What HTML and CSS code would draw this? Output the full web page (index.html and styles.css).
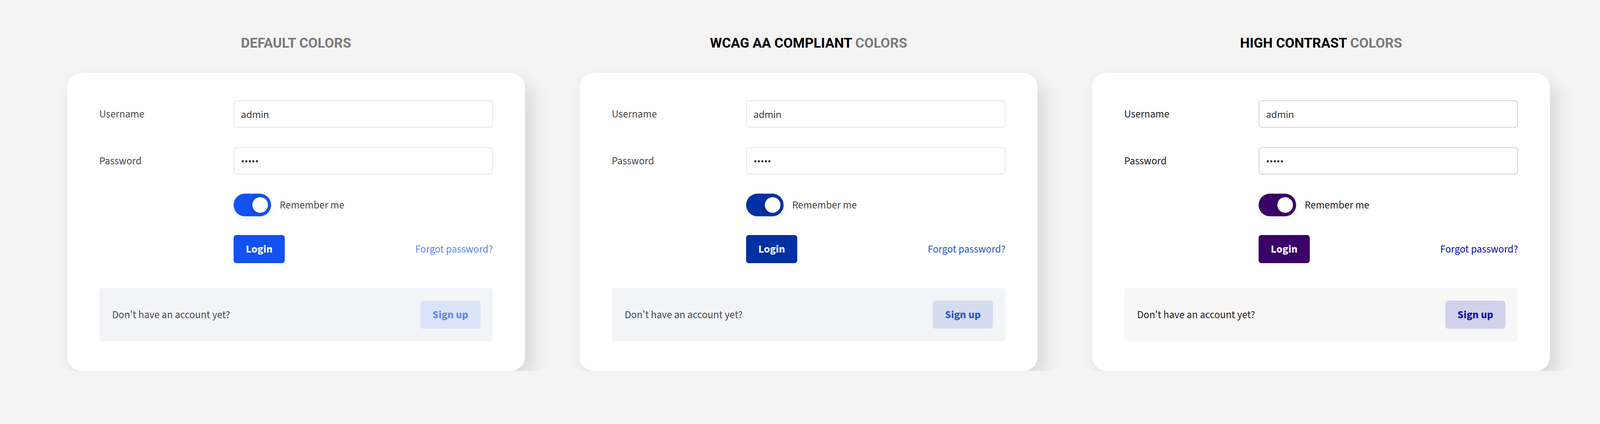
FILE: index.html
```html
<!DOCTYPE html>
<html lang="en">
<head>
<meta charset="utf-8">
<title>Login color variants</title>
<link rel="stylesheet" href="styles.css">
</head>
<body>
<main class="page">
  <section class="column">
    <h2 class="title">DEFAULT COLORS</h2>
    <div class="card theme-default">
      <form class="form">
        <div class="row">
          <label class="label">Username</label>
          <input class="input" type="text" value="admin">
        </div>
        <div class="row">
          <label class="label">Password</label>
          <input class="input" type="password" value="admin">
        </div>
        <div class="row row-small">
          <span></span>
          <div class="remember">
            <span class="toggle"><span class="knob"></span></span>
            <span class="remember-text">Remember me</span>
          </div>
        </div>
        <div class="row">
          <span></span>
          <div class="actions">
            <button class="btn-login" type="button">Login</button>
            <a class="forgot">Forgot password?</a>
          </div>
        </div>
      </form>
      <div class="signup">
        <span class="signup-text">Don't have an account yet?</span>
        <button class="btn-signup" type="button">Sign up</button>
      </div>
    </div>
  </section>

  <section class="column">
    <h2 class="title"><span class="title-strong">WCAG AA COMPLIANT</span> COLORS</h2>
    <div class="card theme-wcag">
      <form class="form">
        <div class="row">
          <label class="label">Username</label>
          <input class="input" type="text" value="admin">
        </div>
        <div class="row">
          <label class="label">Password</label>
          <input class="input" type="password" value="admin">
        </div>
        <div class="row row-small">
          <span></span>
          <div class="remember">
            <span class="toggle"><span class="knob"></span></span>
            <span class="remember-text">Remember me</span>
          </div>
        </div>
        <div class="row">
          <span></span>
          <div class="actions">
            <button class="btn-login" type="button">Login</button>
            <a class="forgot">Forgot password?</a>
          </div>
        </div>
      </form>
      <div class="signup">
        <span class="signup-text">Don't have an account yet?</span>
        <button class="btn-signup" type="button">Sign up</button>
      </div>
    </div>
  </section>

  <section class="column">
    <h2 class="title"><span class="title-strong">HIGH CONTRAST</span> COLORS</h2>
    <div class="card theme-hc">
      <form class="form">
        <div class="row">
          <label class="label">Username</label>
          <input class="input" type="text" value="admin">
        </div>
        <div class="row">
          <label class="label">Password</label>
          <input class="input" type="password" value="admin">
        </div>
        <div class="row row-small">
          <span></span>
          <div class="remember">
            <span class="toggle"><span class="knob"></span></span>
            <span class="remember-text">Remember me</span>
          </div>
        </div>
        <div class="row">
          <span></span>
          <div class="actions">
            <button class="btn-login" type="button">Login</button>
            <a class="forgot">Forgot password?</a>
          </div>
        </div>
      </form>
      <div class="signup">
        <span class="signup-text">Don't have an account yet?</span>
        <button class="btn-signup" type="button">Sign up</button>
      </div>
    </div>
  </section>
</main>
</body>
</html>
```

FILE: styles.css
```css
html, body {
  margin: 0;
  padding: 0;
  background: #f4f4f4;
}

body {
  font-family: "Source Sans Pro", "Source Sans 3", Lato, "Liberation Sans", sans-serif;
}

.page {
  display: grid;
  grid-template-columns: repeat(3, 1172px);
  column-gap: 140px;
  padding: 91px 172px 0;
}

.column {
  display: flex;
  flex-direction: column;
}

.title {
  margin: 0 0 56px;
  text-align: center;
  font-family: Roboto, "Liberation Sans", sans-serif;
  font-weight: 700;
  font-size: 35px;
  line-height: 40px;
  color: #7a7a7a;
}

.title-strong {
  color: #000;
}

/* themes */
.theme-default {
  --primary: #1351f0;
  --link: #5c86f5;
  --signup-bg: #dbe3f8;
  --signup-text: #5c86f5;
  --footer-bg: #f3f4f8;
  --input-border: #e7e7ee;
  --text: #4a4a4a;
}

.theme-wcag {
  --primary: #0031a2;
  --link: #2a55c8;
  --signup-bg: #d5dcf0;
  --signup-text: #2a55c8;
  --footer-bg: #f3f4f8;
  --input-border: #e7e7ee;
  --text: #4a4a4a;
}

.theme-hc {
  --primary: #3a0068;
  --link: #0c0ca8;
  --signup-bg: #d1d1eb;
  --signup-text: #0d0aa8;
  --footer-bg: #f7f7f7;
  --input-border: #d2d2d2;
  --text: #222222;
}

.card {
  background: #fff;
  border-radius: 36px;
  padding: 69px 82px 76px;
  box-shadow: 18px 24px 50px rgba(0, 0, 0, 0.12);
}

.form {
  display: flex;
  flex-direction: column;
  gap: 48px;
  margin: 0;
}

.row {
  display: grid;
  grid-template-columns: 344px 1fr;
  align-items: center;
  min-height: 72px;
}

.row-small {
  min-height: 58px;
}

.label {
  font-size: 27px;
  color: var(--text);
}

.input {
  box-sizing: border-box;
  width: 100%;
  height: 70px;
  margin: 0;
  padding: 0 17px;
  border: 2px solid var(--input-border);
  border-radius: 8px;
  background: #fff;
  font-family: "Noto Sans", "Open Sans", sans-serif;
  font-size: 24px;
  color: #333;
  outline: none;
}

.remember {
  display: flex;
  align-items: center;
  gap: 22px;
}

.toggle {
  box-sizing: border-box;
  width: 96px;
  height: 58px;
  border-radius: 29px;
  background: var(--primary);
  display: flex;
  align-items: center;
  justify-content: flex-end;
  padding-right: 8px;
  box-shadow: 0 8px 14px rgba(0, 0, 0, 0.05);
}

.knob {
  width: 40px;
  height: 40px;
  border-radius: 50%;
  background: #fff;
  box-shadow: -5px 0 8px rgba(0, 0, 0, 0.12);
}

.remember-text {
  font-size: 27px;
  color: var(--text);
}

.actions {
  display: flex;
  align-items: center;
  justify-content: space-between;
}

.btn-login {
  width: 131px;
  height: 72px;
  border: 0;
  border-radius: 7px;
  background: var(--primary);
  color: #fff;
  font-family: inherit;
  font-size: 28px;
  font-weight: 700;
  padding: 0;
}

.forgot {
  font-size: 27px;
  color: var(--link);
  text-decoration: none;
}

.signup {
  margin-top: 64px;
  height: 136px;
  box-sizing: border-box;
  background: var(--footer-bg);
  border-radius: 8px;
  padding: 0 32px 0 33px;
  display: flex;
  align-items: center;
  justify-content: space-between;
}

.signup-text {
  font-size: 27px;
  color: var(--text);
}

.btn-signup {
  width: 154px;
  height: 72px;
  border: 0;
  border-radius: 8px;
  background: var(--signup-bg);
  color: var(--signup-text);
  font-family: inherit;
  font-size: 28px;
  font-weight: 700;
  padding: 0;
}
```
